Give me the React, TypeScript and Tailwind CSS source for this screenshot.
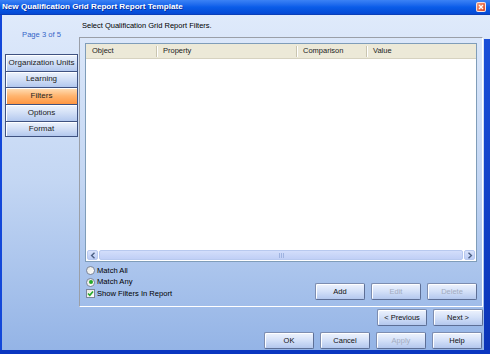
import React from "react";

const font = "font-['Tahoma','Liberation_Sans',Arial,sans-serif]";

function XpButton({ label, disabled }: { label: string; disabled?: boolean }) {
  return (
    <div
      className={`w-[50px] h-[17px] flex items-center justify-center rounded-[2px] border border-[#7d8db0] border-b-[#5d6f96] border-r-[#5d6f96] bg-gradient-to-b from-[#eef3fd] via-[#d3e0f8] to-[#b4c8ee] shadow-[inset_1px_1px_0_#ffffff] text-[7.5px] leading-none ${
        disabled ? "text-[#a3acc0]" : "text-[#111]"
      }`}
    >
      {label}
    </div>
  );
}

function NavItem({ label, active, last }: { label: string; active?: boolean; last?: boolean }) {
  return (
    <div
      className={`h-[16.67px] flex items-center justify-center border-x border-t border-[#3f5281] ${
        last ? "border-b" : ""
      } ${
        active
          ? "bg-gradient-to-b from-[#ffe0b8] via-[#ffb46e] to-[#ff9640] text-[#222]"
          : "bg-gradient-to-b from-[#edf3fd] via-[#d2dff6] to-[#b3c8ee] text-[#222]"
      } text-[8px] leading-none shadow-[inset_1px_1px_0_#ffffff]`}
    >
      {label}
    </div>
  );
}

function HeaderSep() {
  return <div className="w-[2px] h-[11px] border-l border-[#c9c5b0] border-r border-r-white" />;
}

function Chevron({ dir }: { dir: "left" | "right" }) {
  return (
    <svg width="6" height="7" viewBox="0 0 6 7">
      {dir === "left" ? (
        <path d="M4.5 0.8 L1.6 3.5 L4.5 6.2" fill="none" stroke="#4d6185" strokeWidth="1.4" />
      ) : (
        <path d="M1.5 0.8 L4.4 3.5 L1.5 6.2" fill="none" stroke="#4d6185" strokeWidth="1.4" />
      )}
    </svg>
  );
}

function ScrollBtn({ dir }: { dir: "left" | "right" }) {
  return (
    <div className="w-[11px] h-[10px] flex items-center justify-center rounded-[2px] border border-[#b8c9ef] bg-gradient-to-b from-[#d9e3fb] to-[#bccdf6]">
      <Chevron dir={dir} />
    </div>
  );
}

function Radio({ checked, label }: { checked?: boolean; label: string }) {
  return (
    <div className="h-[11.5px] flex items-center gap-[2px]">
      <div className="w-[9px] h-[9px] rounded-full border border-[#7c8599] bg-gradient-to-br from-[#e6e6e0] to-white flex items-center justify-center">
        {checked && <div className="w-[4px] h-[4px] rounded-full bg-[#25a829]" />}
      </div>
      <span className="text-[7.6px] leading-none text-black">{label}</span>
    </div>
  );
}

export default function App() {
  return (
    <div className={`w-[490px] h-[354px] flex flex-col overflow-hidden ${font}`}>
      {/* Title bar */}
      <div className="h-[15px] flex items-center justify-between pl-[2px] pr-[4px] bg-gradient-to-b from-[#3b82f5] via-[#0a5de9] to-[#0548d4] border-b border-[#0a3fb8]">
        <span className="text-white font-bold text-[8.1px] leading-none [text-shadow:1px_1px_0_#0b2f9a]">
          New Qualification Grid Report Report Template
        </span>
        <div className="w-[10px] h-[10px] rounded-[2px] border border-white/80 bg-gradient-to-br from-[#f49b7c] to-[#d9431c] flex items-center justify-center">
          <svg width="6" height="6" viewBox="0 0 6 6">
            <path d="M1 1 L5 5 M5 1 L1 5" stroke="#fff" strokeWidth="1.4" />
          </svg>
        </div>
      </div>

      {/* Body */}
      <div className="flex flex-1 bg-gradient-to-b from-[#dfeafb] via-[#c3d6f3] to-[#94b4e6]">
        <div className="w-[2px] bg-[#1247d9]" />

        {/* Left nav */}
        <div className="w-[77px] flex flex-col pl-[3px] pr-[1px]">
          <div className="pt-[15px] leading-[9px] text-[7.6px] text-[#3565c8] text-center">Page 3 of 5</div>
          <div className="mt-[15px] flex flex-col">
            <NavItem label="Organization Units" />
            <NavItem label="Learning" />
            <NavItem label="Filters" active />
            <NavItem label="Options" />
            <NavItem label="Format" last />
          </div>
        </div>

        {/* Main */}
        <div className="flex-1 flex flex-col">
          <div className="h-[22px] pt-[6px] pl-[3px] leading-[9px] text-[7.5px] text-black">
            Select Qualification Grid Report Filters.
          </div>

          <div className="h-[270px] mr-[1px] border-l border-t border-[#9a9fa8] border-r-white border-b-white border-r border-b px-[5px] pt-[5px] pb-[6px] flex flex-col">
            {/* Grid */}
            <div className="h-[219px] bg-white border border-[#7f9db9] flex flex-col">
              <div className="h-[15px] flex items-center bg-[#ece9d8] border-b border-[#d6d2c0] text-[7.5px] leading-none text-[#222]">
                <div className="w-[70px] pl-[6px]">Object</div>
                <HeaderSep />
                <div className="w-[138px] pl-[5px]">Property</div>
                <HeaderSep />
                <div className="w-[68px] pl-[5px]">Comparison</div>
                <HeaderSep />
                <div className="flex-1 pl-[5px]">Value</div>
              </div>
              <div className="flex-1" />
              <div className="h-[11px] flex items-center gap-[1px] px-[1px] pb-[1px]">
                <ScrollBtn dir="left" />
                <div className="flex-1 h-[10px] rounded-[2px] border border-[#b8c9ef] bg-gradient-to-b from-[#d3defb] to-[#c0cff6] flex items-center justify-center gap-[1px]">
                  <div className="w-[1px] h-[5px] bg-[#9fb3e0]" />
                  <div className="w-[1px] h-[5px] bg-[#9fb3e0]" />
                  <div className="w-[1px] h-[5px] bg-[#9fb3e0]" />
                </div>
                <ScrollBtn dir="right" />
              </div>
            </div>

            {/* Options + buttons */}
            <div className="flex-1 flex justify-between items-end">
              <div className="pl-[1px] pt-[3px] self-start flex flex-col">
                <Radio label="Match All" />
                <Radio label="Match Any" checked />
                <div className="h-[11.5px] flex items-center gap-[2px]">
                  <div className="w-[9px] h-[9px] border border-[#7c8599] bg-gradient-to-br from-[#e6e6e0] to-white flex items-center justify-center">
                    <svg width="7" height="7" viewBox="0 0 7 7">
                      <path d="M1 3.5 L2.8 5.3 L6 1.5" fill="none" stroke="#25a829" strokeWidth="1.6" />
                    </svg>
                  </div>
                  <span className="text-[7.6px] leading-none text-black">Show Filters In Report</span>
                </div>
              </div>
              <div className="flex gap-[6px]">
                <XpButton label="Add" />
                <XpButton label="Edit" disabled />
                <XpButton label="Delete" disabled />
              </div>
            </div>
          </div>

          <div className="mt-[2px] flex justify-end gap-[6px] pr-[1px]">
            <XpButton label="< Previous" />
            <XpButton label="Next >" />
          </div>

          <div className="mt-[6px] flex justify-end gap-[6px] pr-[2px]">
            <XpButton label="OK" />
            <XpButton label="Cancel" />
            <XpButton label="Apply" disabled />
            <XpButton label="Help" />
          </div>
        </div>

        {/* Right edge */}
        <div className="w-[6px] flex flex-col">
          <div className="h-[24px]" />
          <div className="flex-1 bg-gradient-to-b from-[#1a4fd8] to-[#0a34b8]" />
        </div>
      </div>

      <div className="h-[4px] bg-[#0a36c0]" />
    </div>
  );
}
